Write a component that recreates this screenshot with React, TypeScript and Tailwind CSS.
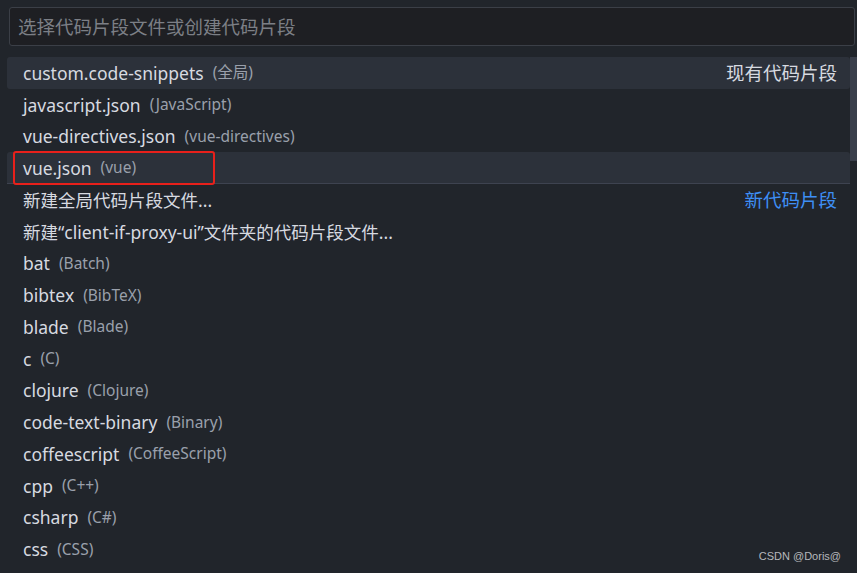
const items: { name: string; desc?: string; right?: string; rightBlue?: boolean; active?: boolean; selected?: boolean; separator?: boolean }[] = [
  { name: "custom.code-snippets", desc: "(全局)", right: "现有代码片段", active: true },
  { name: "javascript.json", desc: "(JavaScript)" },
  { name: "vue-directives.json", desc: "(vue-directives)" },
  { name: "vue.json", desc: "(vue)", selected: true, separator: true },
  { name: "新建全局代码片段文件...", right: "新代码片段", rightBlue: true },
  { name: "新建“client-if-proxy-ui”文件夹的代码片段文件..." },
  { name: "bat", desc: "(Batch)" },
  { name: "bibtex", desc: "(BibTeX)" },
  { name: "blade", desc: "(Blade)" },
  { name: "c", desc: "(C)" },
  { name: "clojure", desc: "(Clojure)" },
  { name: "code-text-binary", desc: "(Binary)" },
  { name: "coffeescript", desc: "(CoffeeScript)" },
  { name: "cpp", desc: "(C++)" },
  { name: "csharp", desc: "(C#)" },
  { name: "css", desc: "(CSS)" },
];

const font = { fontFamily: '"Noto Sans", "Noto Sans CJK SC", sans-serif' };

export default function App() {
  return (
    <div className="w-[857px] h-[573px] bg-[#21252b] relative overflow-hidden" style={font}>
      <div className="pt-[7px] pl-[9px] pr-[2px]">
        <div className="h-[39px] rounded-[3px] border border-[#3b3f47] bg-[#1e1f23] flex items-center pl-[8px] text-[18.5px] text-[#7c7f86]">
          选择代码片段文件或创建代码片段
        </div>
      </div>
      <div className="relative mt-[11px] pl-[7px]">
        {items.map((it, i) => (
          <div
            key={i}
            className={
              "relative h-[31.75px] flex items-center pl-[16px] pr-[13px] w-[843px] rounded-[3px] " +
              (it.active ? "bg-[#2c313a] " : "") +
              (it.selected ? "bg-[#2c313a] " : "") +
              (it.separator ? "border-b border-[#3e4350] rounded-b-none " : "")
            }
          >
            {it.selected && (
              <div className="absolute left-[6px] top-[-1px] w-[202px] h-[34px] border-2 border-[#e8201b] rounded-[3px]" />
            )}
            <span className="text-[17.5px] text-[#d7dae0] whitespace-nowrap">{it.name}</span>
            {it.desc && <span className="ml-[9px] text-[15.5px] text-[#9aa0ab] whitespace-nowrap">{it.desc}</span>}
            {it.right && (
              <span className={"ml-auto text-[18.5px] " + (it.rightBlue ? "text-[#3e8ff5]" : "text-[#d7dae0]")}>
                {it.right}
              </span>
            )}
          </div>
        ))}
        <div className="absolute right-0 top-0 w-[7px] h-[104px] bg-[#3a3f4b]" />
      </div>
      <div
        className="absolute right-[16px] bottom-[9px] text-[11px] text-[#b6b8bc]"
        style={{ fontFamily: '"Liberation Sans", sans-serif' }}
      >
        CSDN @Doris@
      </div>
    </div>
  );
}
